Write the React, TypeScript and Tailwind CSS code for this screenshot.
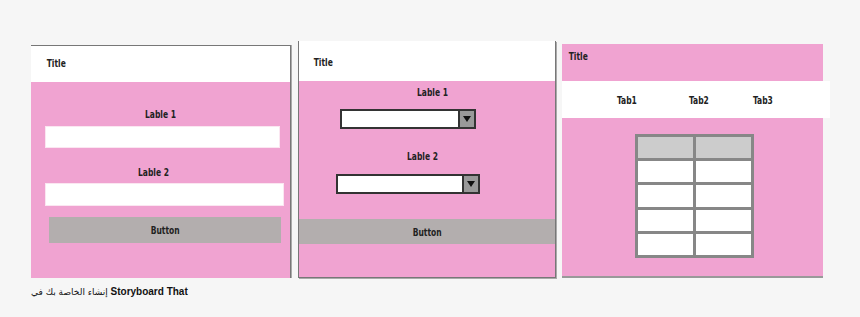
import React from 'react'

const font = "font-['DejaVu_Sans',sans-serif] font-bold text-[10.5px] leading-[12px] text-[#222]"

const T = ({ children }: { children: React.ReactNode }) => (
  <span className="inline-block origin-center scale-x-[0.72] whitespace-nowrap">{children}</span>
)

const Select = ({ w }: { w: string }) => (
  <div className={`flex h-[20px] border-2 border-[#333] bg-white ${w}`}>
    <div className="flex-1" />
    <div className="flex w-[16px] items-center justify-center border-l-2 border-[#333] bg-[#999]">
      <svg width="8" height="6" viewBox="0 0 8 6">
        <path d="M0 0 L8 0 L4 6 Z" fill="#111" />
      </svg>
    </div>
  </div>
)

const App = () => {
  return (
    <div className="h-[317px] w-[860px] bg-[#f6f6f6]">
      <div className="flex items-end pl-[31px] pt-[41px]">
        {/* form panel */}
        <div className="flex h-[233px] w-[260px] flex-col border-t border-r border-[#777] shadow-[1px_0_0_#aaa]">
          <div className={`h-[36px] bg-white pl-[12px] pt-[11px] ${font}`}><T>Title</T></div>
          <div className="flex flex-1 flex-col bg-[#f0a3d1]">
            <div className={`pt-[26px] text-center ${font}`}><T>Lable 1</T></div>
            <div className="ml-[14px] mr-[10px] mt-[6px] h-[22px] border border-[#fbe6f1] bg-white" />
            <div className={`pt-[18px] pr-[14px] text-center ${font}`}><T>Lable 2</T></div>
            <div className="ml-[14px] mr-[6px] mt-[5px] h-[23px] border border-[#fbe6f1] bg-white" />
            <div className={`ml-[18px] mr-[9px] mt-[11px] flex h-[26px] items-center justify-center bg-[#b3aeae] ${font}`}><T>Button</T></div>
          </div>
        </div>

        {/* dropdown panel */}
        <div className="ml-[7px] flex h-[237px] w-[258px] flex-col border-l border-r border-b border-[#777] shadow-[1px_1px_0_#aaa]">
          <div className={`h-[40px] bg-white pl-[11px] pt-[15px] ${font}`}><T>Title</T></div>
          <div className="flex flex-1 flex-col bg-[#f0a3d1]">
            <div className={`pt-[5px] pl-[10px] text-center ${font}`}><T>Lable 1</T></div>
            <div className="ml-[41px] mt-[11px]">
              <Select w="w-[136px]" />
            </div>
            <div className={`pt-[21px] pr-[10px] text-center ${font}`}><T>Lable 2</T></div>
            <div className="ml-[37px] mt-[12px]">
              <Select w="w-[144px]" />
            </div>
            <div className={`mt-[25px] flex h-[25px] items-center justify-center bg-[#b3aeae] ${font}`}><T>Button</T></div>
          </div>
        </div>

        {/* tabs panel */}
        <div className="ml-[6px] flex h-[234px] w-[261px] flex-col border-b-2 border-[#999]">
          <div className={`h-[37px] bg-[#f0a3d1] pl-[3px] pt-[6px] ${font}`}><T>Title</T></div>
          <div className={`flex h-[37px] w-[268px] items-center bg-white ${font}`}>
            <span className="ml-[51px]"><T>Tab1</T></span>
            <span className="ml-[44px]"><T>Tab2</T></span>
            <span className="ml-[37px]"><T>Tab3</T></span>
          </div>
          <div className="flex flex-1 justify-center bg-[#f0a3d1] pt-[16px] pl-[4px]">
            <div className="grid h-[124px] w-[119px] grid-cols-2 grid-rows-5 gap-[3px] bg-[#878787] p-[3px]">
              <div className="bg-[#cccccc]" />
              <div className="bg-[#cccccc]" />
              {Array.from({ length: 8 }).map((_, i) => (
                <div key={i} className="bg-white" />
              ))}
            </div>
          </div>
        </div>
      </div>

      <p className="pl-[31px] pt-[8px] font-['Liberation_Sans',Arial,sans-serif] text-[10px] leading-[12px] font-semibold text-[#111]">
        <span className="font-['DejaVu_Sans',sans-serif] text-[9px] font-normal">إنشاء الخاصة بك في</span> Storyboard That
      </p>
    </div>
  )
}

export default App
